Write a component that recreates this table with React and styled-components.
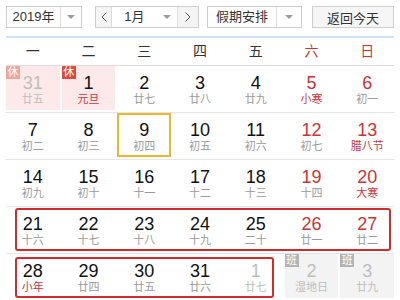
import React from 'react';
import styled, { createGlobalStyle } from 'styled-components';

const GlobalStyle = createGlobalStyle`
  body {
    margin: 0;
    background: #fff;
    font-family: "Liberation Sans", "Noto Sans CJK SC", sans-serif;
  }
`;

const weekdays = ['一', '二', '三', '四', '五', '六', '日'];

// tone: rest = 休 (pink), work = 班 (gray)
const weeks = [
  [
    { d: 31, l: '廿五', other: true, badge: '休', tone: 'rest' },
    { d: 1, l: '元旦', fest: true, badge: '休', tone: 'rest' },
    { d: 2, l: '廿七' },
    { d: 3, l: '廿八' },
    { d: 4, l: '廿九' },
    { d: 5, l: '小寒', fest: true },
    { d: 6, l: '初一' },
  ],
  [
    { d: 7, l: '初二' },
    { d: 8, l: '初三' },
    { d: 9, l: '初四', today: true },
    { d: 10, l: '初五' },
    { d: 11, l: '初六' },
    { d: 12, l: '初七' },
    { d: 13, l: '腊八节', fest: true },
  ],
  [
    { d: 14, l: '初九' },
    { d: 15, l: '初十' },
    { d: 16, l: '十一' },
    { d: 17, l: '十二' },
    { d: 18, l: '十三' },
    { d: 19, l: '十四' },
    { d: 20, l: '大寒', fest: true },
  ],
  [
    { d: 21, l: '十六' },
    { d: 22, l: '十七' },
    { d: 23, l: '十八' },
    { d: 24, l: '十九' },
    { d: 25, l: '二十' },
    { d: 26, l: '廿一' },
    { d: 27, l: '廿二' },
  ],
  [
    { d: 28, l: '小年', fest: true },
    { d: 29, l: '廿四' },
    { d: 30, l: '廿五' },
    { d: 31, l: '廿六' },
    { d: 1, l: '廿七', other: true },
    { d: 2, l: '湿地日', other: true, badge: '班', tone: 'work' },
    { d: 3, l: '廿九', other: true, badge: '班', tone: 'work' },
  ],
];

const Page = styled.div`
  width: 388px;
  padding: 6px 6px 0;
`;

const Toolbar = styled.div`
  display: flex;
  align-items: center;
  height: 22px;
  font-size: 13px;
  color: #333;
`;

const Box = styled.div`
  display: flex;
  box-sizing: border-box;
  width: ${p => p.$w}px;
  height: 22px;
  margin-right: ${p => p.$mr || 0}px;
  border: 1px solid #cfcfcf;
  background: #fff;
`;

const Label = styled.div`
  flex: ${p => (p.$w ? 'none' : 1)};
  width: ${p => (p.$w ? `${p.$w}px` : 'auto')};
  display: flex;
  align-items: center;
  justify-content: center;
  line-height: 20px;
`;

const Arrow = styled.div`
  width: ${p => p.$w}px;
  display: flex;
  align-items: center;
  justify-content: center;
  border-left: ${p => (p.$line ? '1px solid #dcdcdc' : 'none')};

  &::after {
    content: '';
    border-left: 4px solid transparent;
    border-right: 4px solid transparent;
    border-top: 4px solid #9a9a9a;
  }
`;

const NavBtn = styled.div`
  width: ${p => p.$w}px;
  display: flex;
  align-items: center;
  justify-content: center;
  background: #f4f4f4;
  color: #555;
  border-left: ${p => (p.$side === 'right' ? '1px solid #dcdcdc' : 'none')};
  border-right: ${p => (p.$side === 'left' ? '1px solid #dcdcdc' : 'none')};

  svg {
    display: block;
  }
`;

const TodayButton = styled.button`
  box-sizing: border-box;
  width: 82px;
  height: 22px;
  padding: 0;
  border: 1px solid #cfcfcf;
  background: #f6f6f6;
  color: #333;
  font-family: inherit;
  font-size: 13px;
`;

const BlueLine = styled.div`
  height: 2px;
  margin-top: 8px;
  background: #cfe1f6;
`;

const WeekHead = styled.div`
  display: grid;
  grid-template-columns: repeat(7, 1fr);
  column-gap: 2px;
  height: 27px;
  border-bottom: 1px solid #dcdcdc;
`;

const WeekDay = styled.div`
  text-align: center;
  line-height: 27px;
  font-size: 14px;
  color: ${p => (p.$weekend ? '#c9363a' : '#333')};
`;

const Row = styled.div`
  position: relative;
  display: grid;
  grid-template-columns: repeat(7, 1fr);
  column-gap: 2px;
  padding-bottom: 2px;
  border-bottom: 1px solid #e6e6e6;
`;

const toneBg = { rest: '#fde9e9', work: '#f3f3f3' };

const Cell = styled.div`
  position: relative;
  box-sizing: border-box;
  height: 44px;
  padding-top: 7px;
  text-align: center;
  background: ${p => toneBg[p.$tone] || 'transparent'};
  box-shadow: ${p => (p.$today ? 'inset 0 0 0 2px #f1b630' : 'none')};
`;

const Num = styled.div`
  font-size: 18px;
  line-height: 20px;
  color: ${p => (p.$other ? '#bdbdbd' : p.$weekend ? '#cc3338' : '#111')};
`;

const Lunar = styled.div`
  margin-top: -1px;
  font-size: 11px;
  line-height: 14px;
  color: ${p => (p.$other ? '#bdbdbd' : p.$fest ? '#c9363a' : '#9a9a9a')};
`;

const Badge = styled.span`
  position: absolute;
  top: 0;
  left: 0;
  width: 14px;
  height: 13px;
  font-size: 11px;
  line-height: 13px;
  text-align: center;
  color: #fff;
  background: ${p => p.$color};
`;

const Mark = styled.div`
  position: absolute;
  box-sizing: border-box;
  left: ${p => p.$left}px;
  top: ${p => p.$top}px;
  width: ${p => p.$w}px;
  height: ${p => p.$h}px;
  border: 2px solid #d42a2c;
  border-radius: 3px;
  pointer-events: none;
`;

const marks = {
  3: { left: 9, top: 1, w: 376, h: 43 },
  4: { left: 9, top: 3, w: 259, h: 41 },
};

const badgeColor = (day) => {
  if (day.tone === 'work') return '#b3b3b3';
  return day.other ? '#f0a49e' : '#df4b42';
};

const Chevron = ({ dir }) => (
  <svg width="6" height="10" viewBox="0 0 6 10" fill="none" stroke="#555" strokeWidth="1">
    {dir === 'left' ? <path d="M5.5 0.5 L1 5 L5.5 9.5" /> : <path d="M0.5 0.5 L5 5 L0.5 9.5" />}
  </svg>
);

const App = () => {
  return (
    <Page>
      <GlobalStyle />
      <Toolbar>
        <Box $w={76} $mr={13}>
          <Label>2019年</Label>
          <Arrow $w={20} $line />
        </Box>
        <Box $w={104} $mr={8}>
          <NavBtn $w={16} $side="left"><Chevron dir="left" /></NavBtn>
          <Label $w={44}>1月</Label>
          <Arrow $w={21} />
          <NavBtn $w={21} $side="right"><Chevron dir="right" /></NavBtn>
        </Box>
        <Box $w={95} $mr={10}>
          <Label>假期安排</Label>
          <Arrow $w={24} $line />
        </Box>
        <TodayButton>返回今天</TodayButton>
      </Toolbar>
      <BlueLine />
      <WeekHead>
        {weekdays.map((w, i) => (
          <WeekDay key={w} $weekend={i > 4}>{w}</WeekDay>
        ))}
      </WeekHead>
      {weeks.map((week, r) => (
        <Row key={r}>
          {week.map((day, i) => (
            <Cell key={i} $tone={day.tone} $today={day.today}>
              {day.badge && <Badge $color={badgeColor(day)}>{day.badge}</Badge>}
              <Num $other={day.other} $weekend={i > 4}>{day.d}</Num>
              <Lunar $other={day.other} $fest={day.fest}>{day.l}</Lunar>
            </Cell>
          ))}
          {marks[r] && (
            <Mark $left={marks[r].left} $top={marks[r].top} $w={marks[r].w} $h={marks[r].h} />
          )}
        </Row>
      ))}
    </Page>
  );
};

export default App;
